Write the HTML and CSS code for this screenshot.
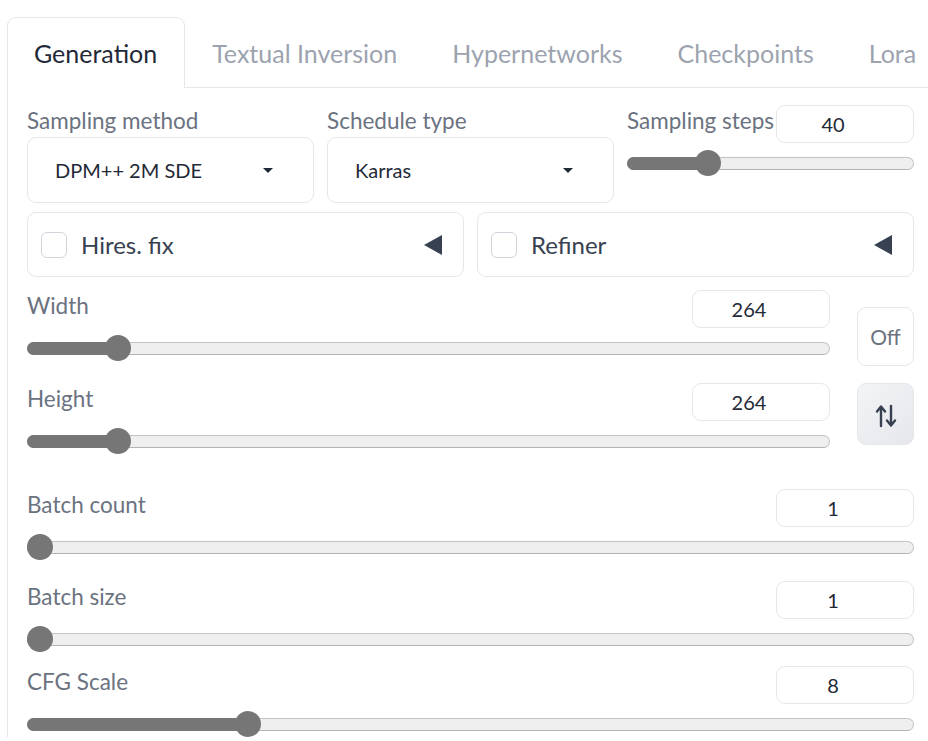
FILE: index.html
```html
<!DOCTYPE html>
<html lang="en">
<head>
<meta charset="utf-8">
<title>txt2img</title>
<link rel="stylesheet" href="styles.css">
</head>
<body>
<div class="tabs">
  <div class="tab-nav">
    <div class="tab active">Generation</div>
    <div class="tab">Textual Inversion</div>
    <div class="tab">Hypernetworks</div>
    <div class="tab">Checkpoints</div>
    <div class="tab">Lora</div>
  </div>
  <div class="panel">
    <div class="row-top">
      <div class="col">
        <div class="label lbl-block">Sampling method</div>
        <div class="dropdown"><span class="dd-value">DPM++ 2M SDE</span><span class="caret"></span></div>
      </div>
      <div class="col">
        <div class="label lbl-block">Schedule type</div>
        <div class="dropdown"><span class="dd-value">Karras</span><span class="caret"></span></div>
      </div>
      <div class="col">
        <div class="sblock">
          <div class="shead"><span class="label">Sampling steps</span><div class="num">40</div></div>
          <div class="slider"><div class="track"><div class="fill" style="width:calc(13px + 0.2617 * (100% - 26px))"></div></div><div class="thumb" style="left:calc(0.2617 * (100% - 26px))"></div></div>
        </div>
      </div>
    </div>

    <div class="row-acc">
      <div class="accordion"><span class="checkbox"></span><span class="acc-label">Hires. fix</span><span class="tri"></span></div>
      <div class="accordion"><span class="checkbox"></span><span class="acc-label">Refiner</span><span class="tri"></span></div>
    </div>

    <div class="row-wh">
      <div class="wh-sliders">
        <div class="sblock">
          <div class="shead"><span class="label">Width</span><div class="num">264</div></div>
          <div class="slider"><div class="track"><div class="fill" style="width:calc(13px + 0.1008 * (100% - 26px))"></div></div><div class="thumb" style="left:calc(0.1008 * (100% - 26px))"></div></div>
        </div>
        <div class="sblock sb-height">
          <div class="shead"><span class="label">Height</span><div class="num">264</div></div>
          <div class="slider"><div class="track"><div class="fill" style="width:calc(13px + 0.1008 * (100% - 26px))"></div></div><div class="thumb" style="left:calc(0.1008 * (100% - 26px))"></div></div>
        </div>
      </div>
      <div class="wh-buttons">
        <div class="btn btn-off">Off</div>
        <div class="btn btn-swap">
          <svg width="22" height="24" viewBox="0 0 22 24" fill="none" stroke="#374151" stroke-width="2.4" stroke-linecap="round" stroke-linejoin="round">
            <path d="M6 22V3M2 7.5L6 2.5L10 7.5"/>
            <path d="M16 2V21M12 16.5L16 21.5L20 16.5"/>
          </svg>
        </div>
      </div>
    </div>

    <div class="sblock sb-count">
      <div class="shead"><span class="label">Batch count</span><div class="num">1</div></div>
      <div class="slider"><div class="track"><div class="fill" style="width:13px"></div></div><div class="thumb" style="left:0"></div></div>
    </div>
    <div class="sblock sb-size">
      <div class="shead"><span class="label">Batch size</span><div class="num">1</div></div>
      <div class="slider"><div class="track"><div class="fill" style="width:13px"></div></div><div class="thumb" style="left:0"></div></div>
    </div>
    <div class="sblock sb-cfg">
      <div class="shead"><span class="label">CFG Scale</span><div class="num">8</div></div>
      <div class="slider"><div class="track"><div class="fill" style="width:calc(13px + 0.2414 * (100% - 26px))"></div></div><div class="thumb" style="left:calc(0.2414 * (100% - 26px))"></div></div>
    </div>
  </div>
</div>
</body>
</html>
```

FILE: styles.css
```css
* { box-sizing: border-box; }
html, body {
  margin: 0;
  padding: 0;
  background: #ffffff;
  overflow: hidden;
}
body {
  width: 928px;
  height: 741px;
  font-family: "Lato", "Noto Sans", sans-serif;
  color: #1f2937;
}
.tabs {
  margin-left: 7px;
  padding-top: 17px;
}
.tab-nav {
  display: flex;
  height: 71px;
  border-bottom: 1px solid #e5e7eb;
}
.tab {
  height: 71px;
  padding: 0 27px 0 26px;
  font-size: 25px;
  line-height: 71px;
  color: #9ca3af;
  white-space: nowrap;
  border: 1px solid transparent;
  border-bottom: none;
}
.tab.active {
  color: #1f2937;
  background: #ffffff;
  border-color: #e5e7eb;
  border-radius: 9px 9px 0 0;
  margin-bottom: -1px;
  height: 71px;
}
.panel {
  border-left: 1px solid #e5e7eb;
  padding: 17px 14px 0 19px;
}
.label {
  font-size: 22.5px;
  line-height: 32px;
  color: #6b7280;
  white-space: nowrap;
}
.lbl-block { display: block; }
.row-top {
  display: grid;
  grid-template-columns: repeat(3, minmax(0, 1fr));
  column-gap: 13px;
}
.col { min-width: 0; }
.dropdown {
  height: 66px;
  border: 1px solid #e5e7eb;
  border-radius: 9px;
  display: flex;
  align-items: center;
  justify-content: space-between;
  padding: 0 40px 0 27px;
  background: #fff;
}
.dd-value {
  font-size: 20px;
  color: #1f2937;
}
.caret {
  width: 0;
  height: 0;
  border-left: 5.5px solid transparent;
  border-right: 5.5px solid transparent;
  border-top: 5px solid #1f2937;
}
.sblock { display: block; }
.shead {
  display: flex;
  align-items: flex-start;
  justify-content: space-between;
  height: 38px;
  gap: 3px;
}
.shead .label { min-width: 0; }
.num {
  flex: none;
  width: 138px;
  height: 38px;
  border: 1px solid #e5e7eb;
  border-radius: 9px;
  background: #fff;
  font-size: 20px;
  line-height: 36px;
  text-align: center;
  padding: 0 32px 0 8px;
  color: #1f2937;
}
.slider {
  position: relative;
  height: 26px;
  margin-top: 7px;
  display: flex;
  align-items: center;
}
.track {
  position: relative;
  width: 100%;
  height: 13px;
  background: #efefef;
  border: 1px solid #c3c3c3;
  border-bottom-color: #b3b3b3;
  border-radius: 7px;
}
.fill {
  position: absolute;
  left: -1px;
  top: -1px;
  bottom: -1px;
  background: #767676;
  border-radius: 7px 0 0 7px;
}
.thumb {
  position: absolute;
  top: 0;
  width: 26px;
  height: 26px;
  border-radius: 50%;
  background: #767676;
}
.row-acc {
  display: grid;
  grid-template-columns: repeat(2, minmax(0, 1fr));
  column-gap: 13px;
  margin-top: 9px;
}
.accordion {
  height: 65px;
  border: 1px solid #e5e7eb;
  border-radius: 9px;
  display: flex;
  align-items: center;
  padding: 0 21px 0 13px;
  background: #fff;
}
.checkbox {
  flex: none;
  width: 26px;
  height: 26px;
  border: 1px solid #d1d5db;
  border-radius: 6px;
  background: #fff;
}
.acc-label {
  flex: 1;
  margin-left: 14px;
  font-size: 24px;
  color: #374151;
}
.tri {
  width: 0;
  height: 0;
  border-top: 10px solid transparent;
  border-bottom: 10px solid transparent;
  border-right: 18px solid #374151;
}
.row-wh {
  display: grid;
  grid-template-columns: minmax(0, 1fr) 57px;
  column-gap: 27px;
  margin-top: 13px;
}
.sb-height { margin-top: 22px; }
.wh-buttons {
  display: flex;
  flex-direction: column;
  padding-top: 17px;
  gap: 17px;
}
.btn {
  border: 1px solid #e5e7eb;
  border-radius: 9px;
  display: flex;
  align-items: center;
  justify-content: center;
}
.btn-off {
  height: 59px;
  background: #fff;
  font-size: 21px;
  color: #6b7280;
}
.btn-swap {
  height: 62px;
  background: linear-gradient(135deg, #f3f4f6, #e5e7eb);
  padding-top: 4px;
}
.sb-count { margin-top: 35px; }
.sb-size { margin-top: 21px; }
.sb-cfg { margin-top: 14px; }
```
